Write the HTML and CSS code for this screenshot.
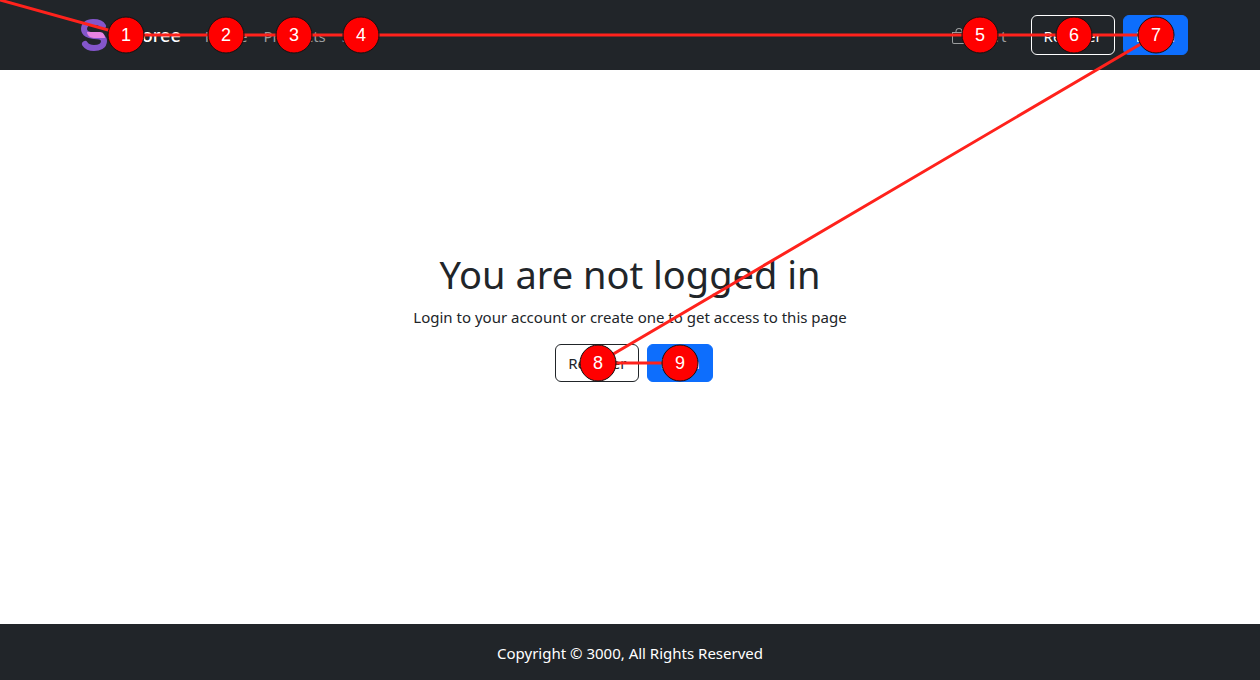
FILE: index.html
```html
<!DOCTYPE html>
<html lang="en">
<head>
<meta charset="utf-8">
<meta name="viewport" content="width=device-width, initial-scale=1">
<title>Storee</title>
<link rel="stylesheet" href="styles.css">
</head>
<body>
<header class="navbar">
  <div class="container">
    <a class="brand" href="#">
      <svg class="logo" viewBox="0 0 26 32" aria-hidden="true">
        <path d="M22 7C20 3 15 3 12 3C6 3 3 6 3 10C3 15 8 16 13 17C19 17 23 18 23 22C23 27 18 29 13 29C9 29 6 28 4 25" fill="none" stroke="#8456cb" stroke-width="6" stroke-linecap="round"/>
        <path d="M6 13H19C22 13 24 16 24 19H13C9 19 6 16 6 13Z" fill="#e884e2"/>
      </svg>
      <span>Storee</span>
    </a>
    <nav class="links">
      <a href="#">Home</a>
      <a href="#">Products</a>
      <a href="#">Store</a>
    </nav>
    <div class="actions">
      <a class="cart" href="#">
        <svg class="bag" viewBox="0 0 16 16" aria-hidden="true"><path d="M8 1a2.500 2.500 0 0 1 2.500 2.500V4h-5v-.5A2.500 2.500 0 0 1 8 1zm3.500 3v-.5a3.500 3.500 0 1 0-7 0V4H1v10a2 2 0 0 0 2 2h10a2 2 0 0 0 2-2V4h-3.500zM2 5h12v9a1 1 0 0 1-1 1H3a1 1 0 0 1-1-1V5z" fill="currentColor"/></svg>
        <span>Cart</span>
      </a>
      <button class="btn btn-light" type="button">Register</button>
      <button class="btn btn-primary" type="button">Login</button>
    </div>
  </div>
</header>
<main class="content">
  <h1>You are not logged in</h1>
  <p>Login to your account or create one to get access to this page</p>
  <div class="choices">
    <button class="btn btn-dark" type="button">Register</button>
    <button class="btn btn-primary" type="button">Login</button>
  </div>
</main>
<footer class="footer">Copyright © 3000, All Rights Reserved</footer>
<svg class="tab-order" viewBox="0 0 1260 680" role="img" aria-label="Keyboard focus order">
  <polyline points="0,0 126,35 226,35 294,35 361,35 980,35 1074,35 1156,35 598,363 680,363"/>
  <g>
    <circle cx="126" cy="35" r="18"/><circle cx="226" cy="35" r="18"/><circle cx="294" cy="35" r="18"/>
    <circle cx="361" cy="35" r="18"/><circle cx="980" cy="35" r="18"/><circle cx="1074" cy="35" r="18"/>
    <circle cx="1156" cy="35" r="18"/><circle cx="598" cy="363" r="18"/><circle cx="680" cy="363" r="18"/>
  </g>
  <g>
    <text x="126" y="41">1</text><text x="226" y="41">2</text><text x="294" y="41">3</text>
    <text x="361" y="41">4</text><text x="980" y="41">5</text><text x="1074" y="41">6</text>
    <text x="1156" y="41">7</text><text x="598" y="369">8</text><text x="680" y="369">9</text>
  </g>
</svg>
</body>
</html>
```

FILE: styles.css
```css
* { box-sizing: border-box; }
body {
  margin: 0;
  min-height: 100vh;
  display: flex;
  flex-direction: column;
  position: relative;
  background: #fff;
  color: #212529;
  font: 15px/24px "Noto Sans", "Open Sans", sans-serif;
}
a { color: inherit; text-decoration: none; }
.navbar { background: #212529; padding: 15px 0; }
.container {
  display: flex;
  align-items: center;
  width: 100%;
  max-width: 1140px;
  margin: 0 auto;
  padding: 0 12px;
}
.brand {
  display: flex;
  align-items: center;
  gap: 18px;
  padding-left: 9px;
  margin-right: 16px;
  color: #fff;
  font-size: 18px;
  font-weight: 500;
}
.logo { width: 26px; height: 32px; }
.links { display: flex; color: #9b9d9e; }
.links a { padding: 9px 8px 7px; }
.actions { display: flex; align-items: center; gap: 8px; margin-left: auto; }
.cart {
  display: flex;
  align-items: center;
  gap: 10px;
  margin-right: 16px;
  padding-top: 2px;
  color: #9b9d9e;
}
.bag { width: 16px; height: 16px; }
.btn {
  height: 38px;
  padding: 0 12px;
  border: 1px solid;
  border-radius: 6px;
  background: transparent;
  font: inherit;
}
.actions .btn { height: 40px; padding-top: 2px; }
.btn-light { color: #fff; }
.btn-dark { color: #212529; }
.btn-primary { background: #0d6efd; border-color: #0d6efd; color: #fff; }
.content {
  flex: 1;
  display: flex;
  flex-direction: column;
  align-items: center;
  justify-content: center;
  padding: 16px 16px 78px;
  text-align: center;
}
h1 { margin: 0 0 7px; font-size: 38px; line-height: 48px; font-weight: 400; }
p { margin: 0 0 15px; }
.choices { display: flex; gap: 8px; padding-left: 8px; }
.footer { background: #212529; color: #fff; padding: 17px 16px 15px; text-align: center; }
.tab-order { position: absolute; top: 0; left: 0; width: 100%; pointer-events: none; }
.tab-order polyline { fill: none; stroke: #ff221c; stroke-width: 3; }
.tab-order circle { fill: #f00; stroke: #111; stroke-width: 1; }
.tab-order text {
  fill: #fff;
  font: 18px "Liberation Sans", Arial, sans-serif;
  text-anchor: middle;
}
```
